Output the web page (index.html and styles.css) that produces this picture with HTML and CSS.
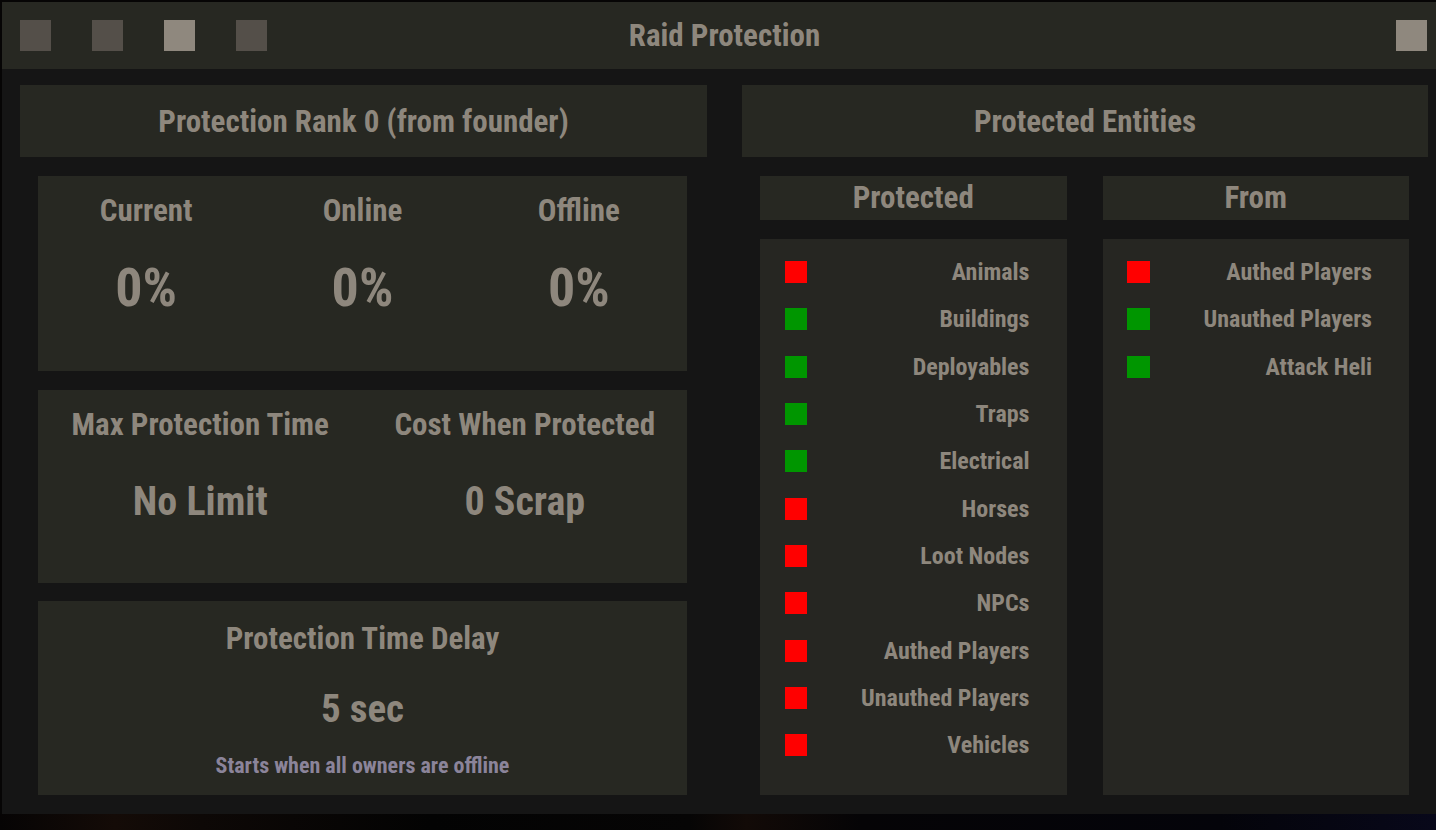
FILE: index.html
```html
<!DOCTYPE html>
<html>
<head>
<meta charset="utf-8">
<title>Raid Protection</title>
<link rel="stylesheet" href="styles.css">
</head>
<body>
<div class="window">
  <div class="titlebar">
    <div class="tb-left">
      <span class="tb-btn"></span>
      <span class="tb-btn"></span>
      <span class="tb-btn tb-btn-light"></span>
      <span class="tb-btn"></span>
    </div>
    <div class="tb-title">Raid Protection</div>
    <div class="tb-right">
      <span class="tb-btn tb-btn-light"></span>
    </div>
  </div>
  <div class="content">
    <section class="col col-left">
      <div class="col-head">Protection Rank 0 (from founder)</div>
      <div class="stack">
        <div class="card card-three">
          <div class="stat">
            <div class="stat-label">Current</div>
            <div class="stat-big">0%</div>
          </div>
          <div class="stat">
            <div class="stat-label">Online</div>
            <div class="stat-big">0%</div>
          </div>
          <div class="stat">
            <div class="stat-label">Offline</div>
            <div class="stat-big">0%</div>
          </div>
        </div>
        <div class="card card-two">
          <div class="stat">
            <div class="stat-label">Max Protection Time</div>
            <div class="stat-mid">No Limit</div>
          </div>
          <div class="stat">
            <div class="stat-label">Cost When Protected</div>
            <div class="stat-mid">0 Scrap</div>
          </div>
        </div>
        <div class="card card-one">
          <div class="stat">
            <div class="stat-label">Protection Time Delay</div>
            <div class="stat-mid stat-mid-delay">5 sec</div>
            <div class="stat-note">Starts when all owners are offline</div>
          </div>
        </div>
      </div>
    </section>
    <section class="col col-right">
      <div class="col-head">Protected Entities</div>
      <div class="lists">
        <div class="list-col">
          <div class="list-head">Protected</div>
          <div class="list-body">
            <div class="row"><span class="dot off"></span><span class="row-text">Animals</span></div>
            <div class="row"><span class="dot on"></span><span class="row-text">Buildings</span></div>
            <div class="row"><span class="dot on"></span><span class="row-text">Deployables</span></div>
            <div class="row"><span class="dot on"></span><span class="row-text">Traps</span></div>
            <div class="row"><span class="dot on"></span><span class="row-text">Electrical</span></div>
            <div class="row"><span class="dot off"></span><span class="row-text">Horses</span></div>
            <div class="row"><span class="dot off"></span><span class="row-text">Loot Nodes</span></div>
            <div class="row"><span class="dot off"></span><span class="row-text">NPCs</span></div>
            <div class="row"><span class="dot off"></span><span class="row-text">Authed Players</span></div>
            <div class="row"><span class="dot off"></span><span class="row-text">Unauthed Players</span></div>
            <div class="row"><span class="dot off"></span><span class="row-text">Vehicles</span></div>
          </div>
        </div>
        <div class="list-col">
          <div class="list-head">From</div>
          <div class="list-body list-body-from">
            <div class="row"><span class="dot off"></span><span class="row-text">Authed Players</span></div>
            <div class="row"><span class="dot on"></span><span class="row-text">Unauthed Players</span></div>
            <div class="row"><span class="dot on"></span><span class="row-text">Attack Heli</span></div>
          </div>
        </div>
      </div>
    </section>
  </div>
</div>
<div class="backdrop"></div>
</body>
</html>
```

FILE: styles.css
```css
html, body {
  margin: 0;
  padding: 0;
}
body {
  width: 1436px;
  height: 830px;
  overflow: hidden;
  background: #060505;
  font-family: "Roboto Condensed", "Roboto", "Liberation Sans Narrow", sans-serif;
  font-stretch: 75%;
  font-weight: 700;
  color: #8e877d;
  display: flex;
  flex-direction: column;
}
.window {
  margin: 2px 0 0 2px;
  width: 1434px;
  height: 812px;
  display: flex;
  flex-direction: column;
  background: #151515;
}
.backdrop {
  flex: 1;
  background: linear-gradient(90deg, #060404 0%, #140b07 8%, #0d0806 14%, #030303 30%, #060505 48%, #120a07 52%, #050406 60%, #04040a 85%, #08081a 100%);
}
.titlebar {
  height: 67px;
  flex: none;
  background: #272822;
  display: grid;
  grid-template-columns: 1fr auto 1fr;
  align-items: center;
}
.tb-left {
  display: flex;
  gap: 41px;
  padding-left: 18px;
}
.tb-right {
  display: flex;
  justify-content: flex-end;
  padding-right: 9px;
}
.tb-btn {
  display: block;
  width: 31px;
  height: 31px;
  background: #544f49;
}
.tb-btn-light {
  background: #8f887e;
}
.tb-title {
  font-size: 31px;
  line-height: 36px;
  padding-left: 11px;
}
.content {
  flex: 1;
  display: flex;
  gap: 35px;
  padding: 16px 6px 19px 18px;
}
.col {
  display: flex;
  flex-direction: column;
}
.col-left {
  width: 687px;
}
.col-right {
  width: 686px;
}
.col-head {
  height: 72px;
  flex: none;
  background: #272822;
  text-align: center;
  font-size: 31px;
  line-height: 73px;
}
.stack {
  display: flex;
  flex-direction: column;
  gap: 18.5px;
  padding: 19px 20px 0 18px;
}
.card {
  flex: none;
  box-sizing: border-box;
  background: #272822;
  display: grid;
  text-align: center;
  align-items: start;
}
.card-three {
  height: 195px;
  grid-template-columns: 1fr 1fr 1fr;
  padding-top: 17px;
}
.card-two {
  height: 193px;
  grid-template-columns: 1fr 1fr;
  padding-top: 17px;
}
.card-one {
  height: 194px;
  grid-template-columns: 1fr;
  padding-top: 20px;
}
.stat {
  display: flex;
  flex-direction: column;
  align-items: center;
}
.stat-label {
  font-size: 31px;
  line-height: 36px;
}
.stat-big {
  font-size: 54px;
  line-height: 64px;
  margin-top: 27px;
}
.stat-mid {
  font-size: 40px;
  line-height: 47px;
  margin-top: 35px;
}
.stat-mid-delay {
  font-size: 39px;
  line-height: 46px;
  margin-top: 29px;
}
.stat-note {
  font-size: 22px;
  line-height: 26px;
  margin-top: 21px;
  color: #8b849a;
}
.lists {
  flex: 1;
  display: flex;
  gap: 36px;
  padding: 19px 19px 0 18px;
}
.list-col {
  flex: 1;
  display: flex;
  flex-direction: column;
  gap: 19px;
}
.list-head {
  height: 44px;
  flex: none;
  background: #272822;
  text-align: center;
  font-size: 31px;
  line-height: 44px;
}
.list-body {
  flex: 1;
  background: #262622;
  display: flex;
  flex-direction: column;
  gap: 25.33px;
  padding: 22px 37px 0 25px;
}
.list-body-from {
  padding-left: 24px;
}
.row {
  display: flex;
  align-items: center;
  justify-content: space-between;
  height: 22px;
}
.dot {
  display: block;
  width: 22px;
  height: 22px;
  flex: none;
}
.list-body-from .dot {
  width: 23px;
}
.dot.on {
  background: #009600;
}
.dot.off {
  background: #ff0000;
}
.row-text {
  font-size: 24px;
  line-height: 22px;
}
```
